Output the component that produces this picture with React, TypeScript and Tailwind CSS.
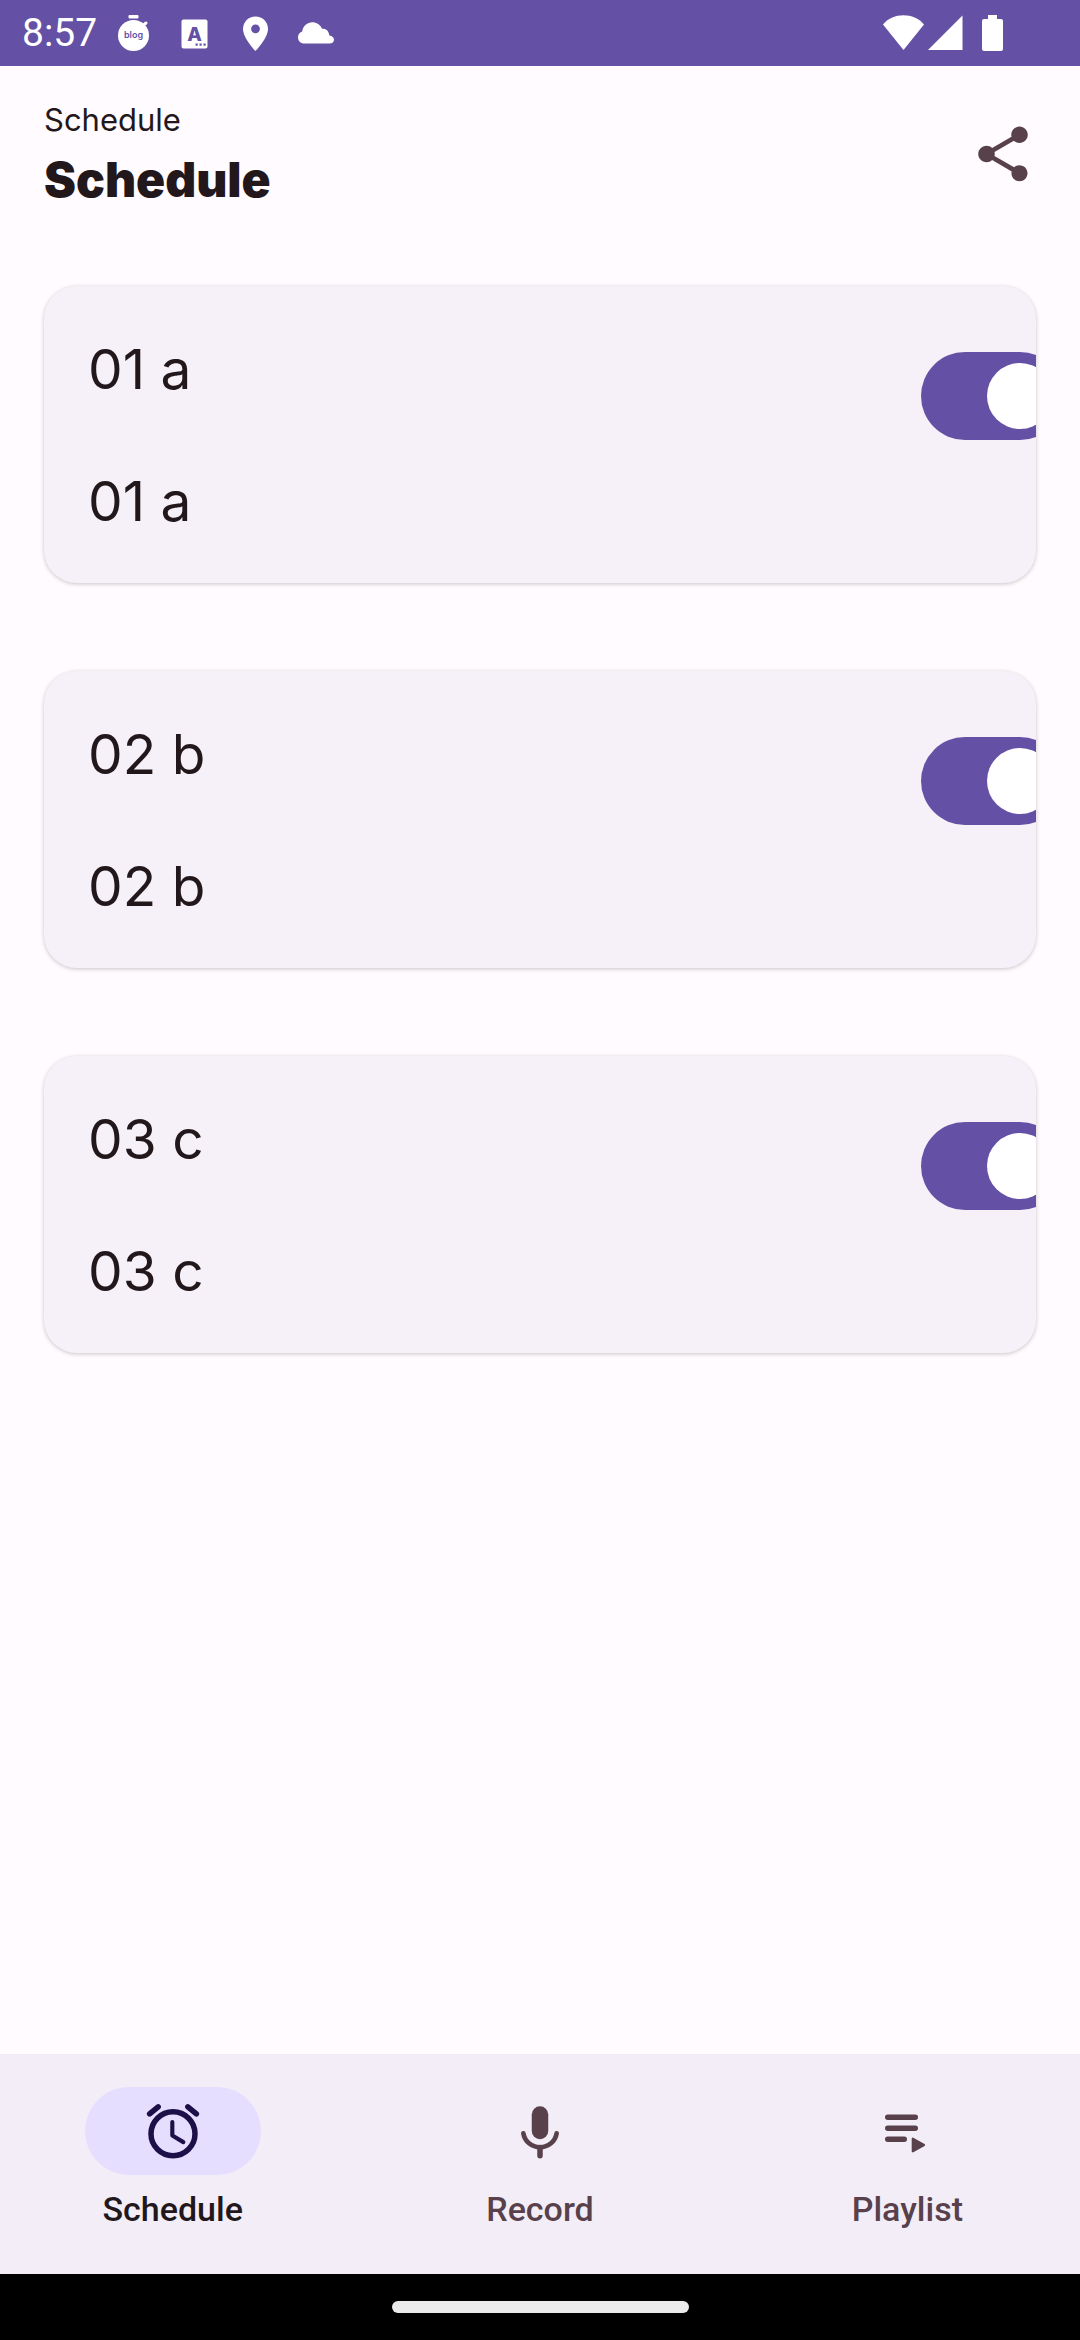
import { useState } from 'react';
import { MdShare } from 'react-icons/md';

interface ScheduleItem {
  id: string;
  title: string;
  detail: string;
  enabled: boolean;
}

type Tab = 'schedule' | 'record' | 'playlist';

const initialItems: ScheduleItem[] = [
  { id: '01', title: '01 a', detail: '01 a', enabled: true },
  { id: '02', title: '02 b', detail: '02 b', enabled: true },
  { id: '03', title: '03 c', detail: '03 c', enabled: true },
];

const tabs = [
  { id: 'schedule' as Tab, label: 'Schedule', icon: AlarmIcon },
  { id: 'record' as Tab, label: 'Record', icon: MicIcon },
  { id: 'playlist' as Tab, label: 'Playlist', icon: PlaylistIcon },
];

export default function App() {
  const [items, setItems] = useState(initialItems);
  const [activeTab, setActiveTab] = useState<Tab>('schedule');

  const toggleItem = (id: string) => {
    setItems(items.map((item) => (item.id === id ? { ...item, enabled: !item.enabled } : item)));
  };

  return (
    <div className="flex min-h-screen flex-col bg-[#fffbff] font-['Inter',sans-serif] text-[#22181c]">
      <StatusBar />

      <header className="flex h-[176px] items-center justify-between px-[44px]">
        <div>
          <p className="text-[31px] leading-[52px]">Schedule</p>
          <h1 className="text-[48px] leading-[68px] font-black">Schedule</h1>
        </div>
        <button aria-label="Share" className="text-[#59414b]">
          <MdShare className="size-[66px]" />
        </button>
      </header>

      <main className="flex flex-1 flex-col gap-[88px] px-[44px] py-[44px]">
        {items.map((item) => (
          <ScheduleCard key={item.id} item={item} onToggle={() => toggleItem(item.id)} />
        ))}
      </main>

      <nav className="grid grid-cols-3 gap-[22px] bg-[#f3edf8] pt-[33px] pb-[42px] font-['Roboto',sans-serif]">
        {tabs.map(({ id, label, icon: Icon }) => {
          const active = id === activeTab;
          return (
            <button
              key={id}
              onClick={() => setActiveTab(id)}
              className={`flex flex-col items-center gap-[11px] ${active ? 'text-[#22181c]' : 'text-[#59414b]'}`}
            >
              <span
                className={`flex h-[88px] w-[176px] items-center justify-center rounded-full ${
                  active ? 'bg-[#e6deff] text-[#1d1049]' : ''
                }`}
              >
                <Icon />
              </span>
              <span className="text-[34px] leading-[46px] font-medium">{label}</span>
            </button>
          );
        })}
      </nav>

      <div className="flex h-[66px] items-center justify-center bg-black">
        <div className="h-[12px] w-[297px] rounded-full bg-[#ebebeb]" />
      </div>
    </div>
  );
}

function ScheduleCard({ item, onToggle }: { item: ScheduleItem; onToggle: () => void }) {
  const switchId = `switch-${item.id}`;

  return (
    <section className="flex items-start overflow-hidden rounded-[33px] bg-[#f6f1f8] shadow-[0_1px_4px_rgba(0,0,0,0.22)]">
      <div className="flex flex-1 flex-col gap-[66px] pt-[50px] pb-[49px] pl-[44px] text-[55px] leading-[66px]">
        <label htmlFor={switchId}>{item.title}</label>
        <p>{item.detail}</p>
      </div>
      {/* the switch runs past the card's right edge and is clipped there */}
      <input
        id={switchId}
        type="checkbox"
        role="switch"
        checked={item.enabled}
        onChange={onToggle}
        className="mt-[66px] -mr-[28px] flex h-[88px] w-[143px] shrink-0 appearance-none items-center rounded-full bg-[#e7e0ec] px-[11px] before:size-[66px] before:rounded-full before:bg-[#79747e] checked:justify-end checked:bg-[#6451a5] checked:before:bg-white"
      />
    </section>
  );
}

function StatusBar() {
  return (
    <div className="flex h-[66px] items-center justify-between bg-[#6451a5] pr-[77px] pl-[22px] text-white">
      <div className="flex items-center gap-5">
        <span className="-mr-[4px] font-['Roboto',sans-serif] text-[39px] leading-[44px]">8:57</span>
        <svg viewBox="0 0 41 41" className="size-[41px]" fill="currentColor">
          <rect x="15.5" y="2" width="10" height="3.6" rx="1" />
          <circle cx="20.5" cy="22.5" r="15.5" />
          <path d="M30 12.500l3-2.500" stroke="currentColor" strokeWidth="3" strokeLinecap="round" />
          <text x="20.500" y="25" textAnchor="middle" fontSize="9" fontWeight="600" fill="#6451a5" className="font-['Inter',sans-serif]">
            blog
          </text>
        </svg>
        <svg viewBox="0 0 41 41" className="size-[41px]" fill="currentColor">
          <rect x="7.500" y="6.500" width="26" height="29" rx="2" />
          <text x="20.500" y="27.500" textAnchor="middle" fontSize="19" fontWeight="800" fill="#6451a5" className="font-['Inter',sans-serif]">
            A
          </text>
          <g fill="#6451a5">
            <rect x="21.500" y="30.500" width="2.200" height="2.200" />
            <rect x="25.500" y="30.500" width="2.200" height="2.200" />
            <rect x="29.500" y="30.500" width="2.200" height="2.200" />
          </g>
        </svg>
        <svg viewBox="0 0 41 41" className="size-[41px]" fill="currentColor">
          <path
            fillRule="evenodd"
            d="M20.500 3.500C13.500 3.500 8 9 8 15.900 8 25 20.500 38 20.500 38S33 25 33 15.900C33 9 27.500 3.500 20.500 3.500zm0 16.700a4.400 4.400 0 1 1 0-8.800 4.400 4.400 0 0 1 0 8.800z"
          />
        </svg>
        <svg viewBox="0 0 41 41" className="size-[41px]" fill="currentColor">
          <path d="M7 30.500a6.300 6.300 0 0 1-.8-12.100C7.200 12.800 11.300 9.300 16.200 9.300c4.400 0 8.200 2.600 9.800 6.500 4.100-.4 6.900 2.300 7.300 6.700 3 .5 4.700 2 4.700 4.200 0 2.300-1.800 3.800-4.500 3.800z" />
        </svg>
      </div>

      <div className="flex items-center">
        <svg viewBox="0 0 41 36" className="h-[36px] w-[41px]" fill="currentColor">
          <path d="M20.500 35L0 9.500C5.500 3 12.500.200 20.500.200S35.500 3 41 9.500z" />
        </svg>
        <svg viewBox="0 0 35 36" className="ml-[4px] h-[36px] w-[35px]" fill="currentColor">
          <path d="M0 35L34.500.500V35z" />
        </svg>
        <svg viewBox="0 0 21 36" className="ml-[19px] h-[36px] w-[21px]" fill="currentColor">
          <path d="M6 0h9v4h4a2 2 0 0 1 2 2v28a2 2 0 0 1-2 2H2a2 2 0 0 1-2-2V6a2 2 0 0 1 2-2h4z" />
        </svg>
      </div>
    </div>
  );
}

function AlarmIcon() {
  return (
    <svg viewBox="0 0 24 24" className="size-[66px]" fill="none" stroke="currentColor" strokeWidth="2" strokeLinecap="round">
      <circle cx="12" cy="13" r="8" />
      <path d="M3.500 5.800l3.100-2.600M20.500 5.800l-3.100-2.600" />
      <path d="M11.750 8.750v4.900l4 2.400" strokeWidth="1.500" strokeLinejoin="round" />
    </svg>
  );
}

function MicIcon() {
  return (
    <svg viewBox="0 0 24 24" className="size-[66px]" fill="none" stroke="currentColor" strokeLinecap="round">
      <rect x="9" y="3" width="6" height="12" rx="3" fill="currentColor" stroke="none" />
      <path d="M5.950 12.850c.450 2.900 3.050 5.050 6.050 5.050s5.600-2.150 6.050-5.050" strokeWidth="1.700" />
      <path d="M12 18v3" strokeWidth="2" />
    </svg>
  );
}

function PlaylistIcon() {
  return (
    <svg viewBox="0 0 24 24" className="size-[66px]" fill="none" stroke="currentColor" strokeWidth="2" strokeLinecap="round">
      <path d="M5 7h10M5 11h10M5 15h6" />
      <path d="M14.100 14.800v4.600l4.100-2.300z" fill="currentColor" strokeWidth=".800" strokeLinejoin="round" />
    </svg>
  );
}
